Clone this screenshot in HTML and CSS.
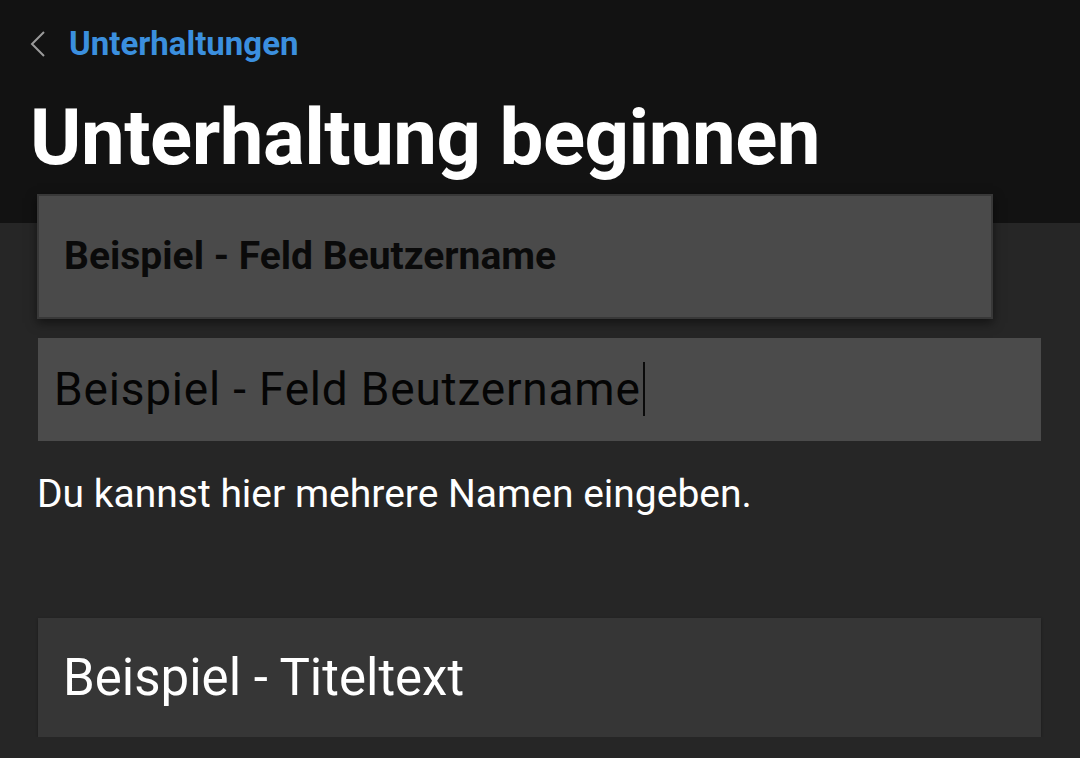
FILE: index.html
```html
<!DOCTYPE html>
<html lang="de">
<head>
<meta charset="utf-8">
<link rel="stylesheet" href="styles.css">
</head>
<body>
<header class="top">
  <div class="nav">
    <svg class="back" width="16" height="26" viewBox="0 0 16 26"><path d="M14 1 L2 13 L14 25" fill="none" stroke="#9a9a9a" stroke-width="2"/></svg>
    <span class="nav-link">Unterhaltungen</span>
  </div>
  <h1 class="title">Unterhaltung beginnen</h1>
</header>
<main class="content">
  <div class="suggest">Beispiel - Feld Beutzername</div>
  <div class="input"><span class="input-text">Beispiel - Feld Beutzername</span><span class="caret"></span></div>
  <p class="hint">Du kannst hier mehrere Namen eingeben.</p>
  <div class="titlebox">Beispiel - Titeltext</div>
</main>
</body>
</html>
```
FILE: styles.css
```css
html, body {
  margin: 0;
  padding: 0;
  background: #262626;
  font-family: Roboto, "Noto Sans", sans-serif;
  overflow: hidden;
}
.top {
  background: #121212;
  height: 223px;
  padding: 0 0 0 30px;
  box-sizing: border-box;
}
.nav {
  display: flex;
  align-items: center;
  gap: 23px;
  padding-top: 25px;
  height: 38px;
}
.back {
  display: block;
}
.nav-link {
  color: #3b8fde;
  font-weight: 700;
  font-size: 33px;
  line-height: 38px;
}
.title {
  margin: 30px 0 0 0;
  color: #ffffff;
  font-weight: 700;
  font-size: 78px;
  line-height: 90px;
  letter-spacing: -0.5px;
}
.content {
  margin-top: -29px;
  padding: 0 39px 0 37px;
  display: flex;
  flex-direction: column;
  position: relative;
}
.suggest {
  width: 956px;
  height: 125px;
  box-sizing: border-box;
  background: #4a4a4a;
  border: 2px solid #383838;
  box-shadow: 0 4px 10px rgba(0,0,0,0.5);
  color: #0a0a0a;
  font-weight: 700;
  font-size: 39px;
  display: flex;
  align-items: center;
  padding-left: 25px;
  padding-bottom: 2px;
}
.input {
  margin-top: 19px;
  margin-left: 1px;
  height: 103px;
  background: #4b4b4b;
  display: flex;
  align-items: center;
  padding-left: 16px;
  padding-bottom: 2px;
  box-sizing: border-box;
}
.input-text {
  color: #050505;
  font-size: 46px;
  letter-spacing: 0.8px;
  font-weight: 400;
}
.caret {
  width: 2px;
  height: 54px;
  background: #0a0a0a;
  margin-left: 2px;
}
.hint {
  margin: 30px 0 0 0;
  color: #ffffff;
  font-size: 39px;
  line-height: 46px;
}
.titlebox {
  margin-top: 101px;
  margin-left: 1px;
  height: 119px;
  background: #363636;
  color: #ffffff;
  font-size: 51px;
  display: flex;
  align-items: center;
  padding-left: 25px;
  box-shadow: 0 1px 3px rgba(0,0,0,0.3);
}
```
